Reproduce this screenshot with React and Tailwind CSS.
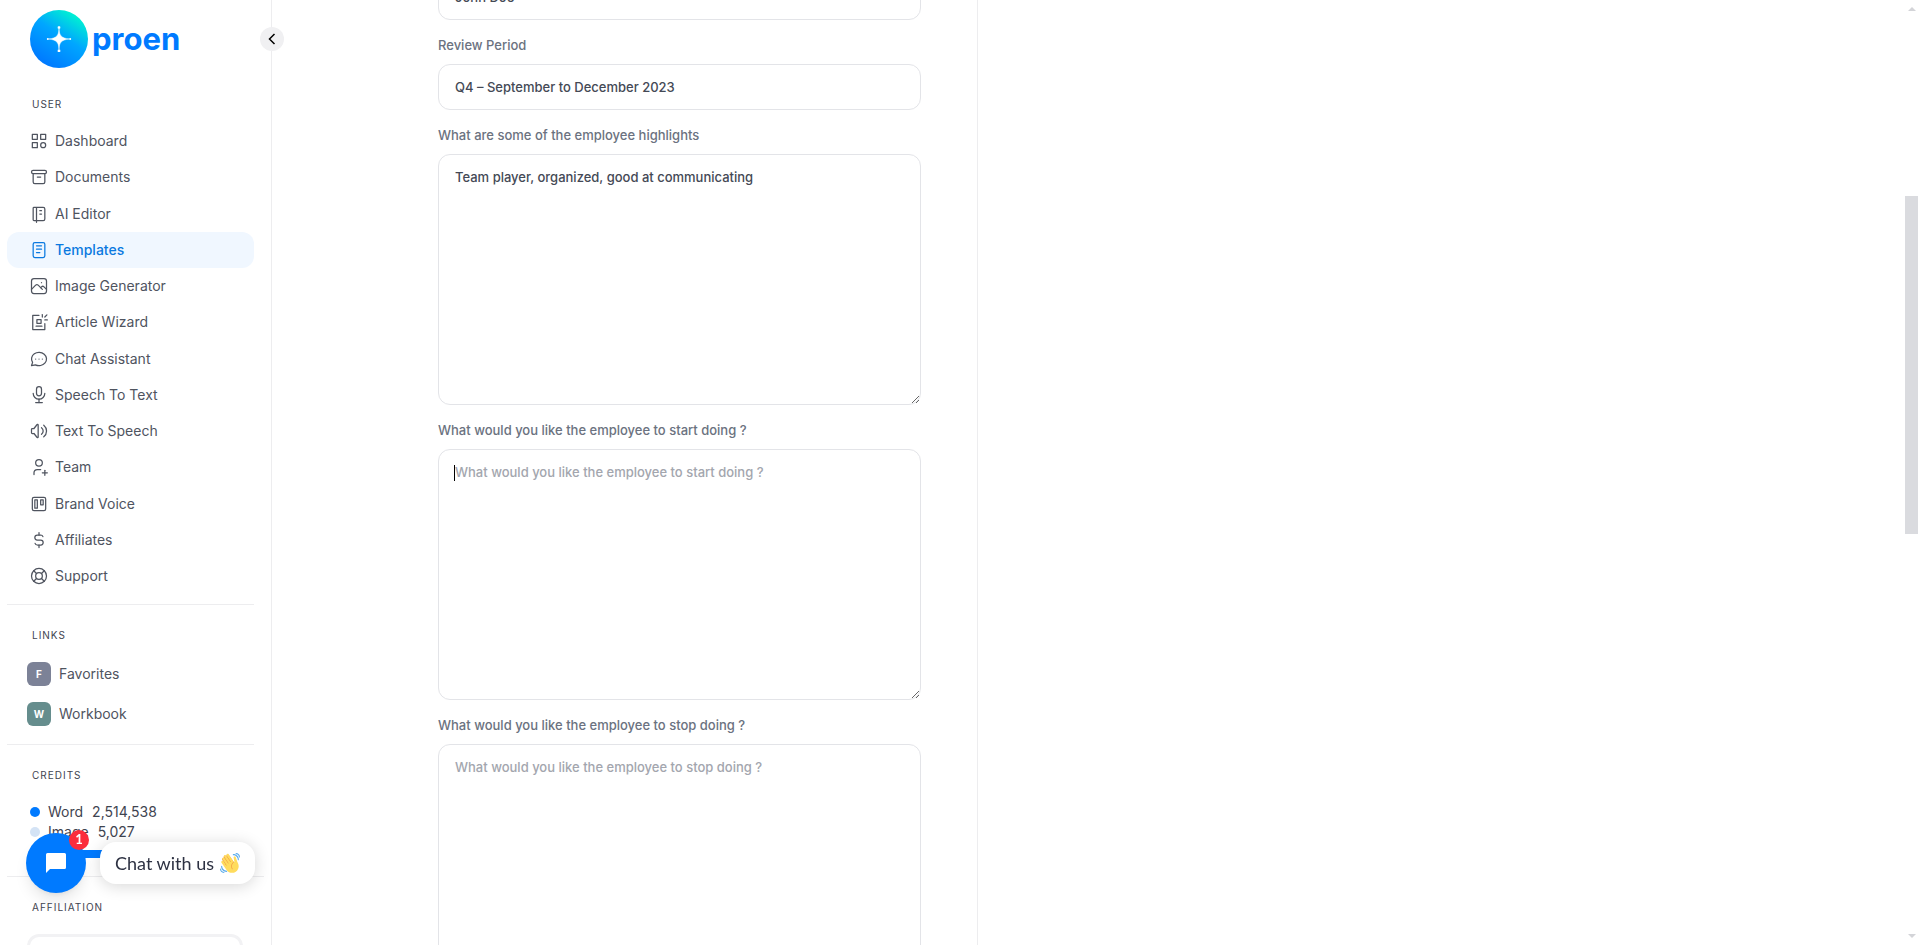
import { useState } from "react";

const menu = [
  {
    name: "Dashboard",
    paths: ["M4 4h6v6h-6z", "M14 4h6v6h-6z", "M4 14h6v6h-6z", "M17 17m-3 0a3 3 0 1 0 6 0a3 3 0 1 0 -6 0"],
  },
  {
    name: "Documents",
    paths: [
      "M3 4m0 2a2 2 0 0 1 2 -2h14a2 2 0 0 1 2 2v0a2 2 0 0 1 -2 2h-14a2 2 0 0 1 -2 -2z",
      "M5 8v10a2 2 0 0 0 2 2h10a2 2 0 0 0 2 -2v-10",
      "M10 12l4 0",
    ],
  },
  {
    name: "AI Editor",
    paths: [
      "M6 4h11a2 2 0 0 1 2 2v12a2 2 0 0 1 -2 2h-11a1 1 0 0 1 -1 -1v-14a1 1 0 0 1 1 -1m3 0v18",
      "M13 8l2 0",
      "M13 12l2 0",
    ],
  },
  {
    name: "Templates",
    paths: [
      "M5 3m0 2a2 2 0 0 1 2 -2h10a2 2 0 0 1 2 2v14a2 2 0 0 1 -2 2h-10a2 2 0 0 1 -2 -2z",
      "M9 7l6 0",
      "M9 11l6 0",
      "M9 15l4 0",
    ],
  },
  {
    name: "Image Generator",
    paths: [
      "M15 8h.01",
      "M3 6a3 3 0 0 1 3 -3h12a3 3 0 0 1 3 3v12a3 3 0 0 1 -3 3h-12a3 3 0 0 1 -3 -3v-12z",
      "M3 16l5 -5c.928 -.893 2.072 -.893 3 0l5 5",
      "M14 14l1 -1c.928 -.893 2.072 -.893 3 0l3 3",
    ],
  },
  {
    name: "Article Wizard",
    paths: [
      "M12 4h-7.500v17h14.500v-7",
      "M9.500 9h5v4.500h-5z",
      "M8.500 17h7",
      "M16 3v3",
      "M21.500 3.500l-2.500 2.500",
      "M19 9.500h3",
    ],
  },
  {
    name: "Chat Assistant",
    paths: [
      "M3 20l1.300 -3.900c-2.324 -3.437 -1.426 -7.872 2.100 -10.374c3.526 -2.501 8.590 -2.296 11.845 .480c3.255 2.777 3.695 7.266 1.029 10.501c-2.666 3.235 -7.615 4.215 -11.574 2.293l-4.700 1",
      "M8 12v.01",
      "M12 12v.01",
      "M16 12v.01",
    ],
  },
  {
    name: "Speech To Text",
    paths: [
      "M9 2m0 3a3 3 0 0 1 3 -3h0a3 3 0 0 1 3 3v5a3 3 0 0 1 -3 3h0a3 3 0 0 1 -3 -3z",
      "M5 10a7 7 0 0 0 14 0",
      "M8 21l8 0",
      "M12 17l0 4",
    ],
  },
  {
    name: "Text To Speech",
    paths: [
      "M15 8a5 5 0 0 1 0 8",
      "M17.700 5a9 9 0 0 1 0 14",
      "M6 15h-2a1 1 0 0 1 -1 -1v-4a1 1 0 0 1 1 -1h2l3.500 -4.500a.8 .8 0 0 1 1.500 .5v14a.8 .8 0 0 1 -1.500 .5l-3.500 -4.500",
    ],
  },
  {
    name: "Team",
    paths: ["M8 7a4 4 0 1 0 8 0a4 4 0 0 0 -8 0", "M16 19h6", "M19 16v6", "M6 21v-2a4 4 0 0 1 4 -4h4"],
  },
  {
    name: "Brand Voice",
    paths: [
      "M4 4m0 2a2 2 0 0 1 2 -2h12a2 2 0 0 1 2 2v12a2 2 0 0 1 -2 2h-12a2 2 0 0 1 -2 -2z",
      "M7 7h3v10h-3z",
      "M14 7h3v6h-3z",
    ],
  },
  {
    name: "Affiliates",
    paths: [
      "M16.700 8a3 3 0 0 0 -2.700 -2h-4a3 3 0 0 0 0 6h4a3 3 0 0 1 0 6h-4a3 3 0 0 1 -2.700 -2",
      "M12 3v3m0 12v3",
    ],
  },
  {
    name: "Support",
    paths: [
      "M12 12m-4 0a4 4 0 1 0 8 0a4 4 0 1 0 -8 0",
      "M12 12m-9 0a9 9 0 1 0 18 0a9 9 0 1 0 -18 0",
      "M15 15l3.350 3.350",
      "M9 15l-3.350 3.350",
      "M5.650 5.650l3.350 3.350",
      "M18.350 5.650l-3.350 3.350",
    ],
  },
];

const links = [
  { name: "Favorites", letter: "F", color: "bg-[#7c8297]" },
  { name: "Workbook", letter: "W", color: "bg-[#658d8d]" },
];

const fields = [
  { id: "name", label: "Employee Name", type: "text", value: "John Doe" },
  { id: "period", label: "Review Period", type: "text", value: "Q4 – September to December 2023" },
  {
    id: "highlights",
    label: "What are some of the employee highlights",
    type: "area",
    value: "Team player, organized, good at communicating",
  },
  { id: "start", label: "What would you like the employee to start doing ?", type: "area", value: "", focus: true },
  { id: "stop", label: "What would you like the employee to stop doing ?", type: "area", value: "" },
];

function Icon({ paths }) {
  return (
    <svg
      className="size-5 shrink-0"
      viewBox="0 0 24 24"
      fill="none"
      stroke="currentColor"
      strokeWidth="1.5"
      strokeLinecap="round"
      strokeLinejoin="round"
    >
      {paths.map((d) => (
        <path key={d} d={d} />
      ))}
    </svg>
  );
}

function Logo() {
  return (
    <a href="#" className="flex items-center gap-1 pl-[30px]">
      <svg className="size-[58px]" viewBox="0 0 58 58">
        <defs>
          <linearGradient id="logo" x1="0.85" y1="0.1" x2="0.3" y2="0.95">
            <stop offset="0" stopColor="#00f5d0" />
            <stop offset="0.45" stopColor="#00a6ff" />
            <stop offset="1" stopColor="#007aff" />
          </linearGradient>
        </defs>
        <circle cx="29" cy="29" r="29" fill="url(#logo)" />
        <path
          d="M29 18.500c.4 7.500 2.500 9.700 10.500 10.500c-8 .8 -10.100 3 -10.500 10.500c-.4 -7.500 -2.500 -9.700 -10.500 -10.500c8 -.8 10.100 -3 10.500 -10.500z"
          fill="#fff"
          stroke="#fff"
          strokeWidth="0.5"
        />
        <g fill="#fff">
          <rect x="27.700" y="16.300" width="2.600" height="2.400" rx="0.600" />
          <rect x="27.700" y="39.500" width="2.600" height="2.600" rx="0.600" />
          <circle cx="17.800" cy="29" r="1" />
          <circle cx="40.200" cy="29" r="1" />
        </g>
      </svg>
      <span className="text-[31px] leading-10 font-bold text-[#007aff]">proen</span>
    </a>
  );
}

function Heading({ children }) {
  return <h2 className="pl-8 text-[10px] leading-4 tracking-widest text-[#3f4450] uppercase">{children}</h2>;
}

function Sidebar() {
  const [active, setActive] = useState("Templates");

  return (
    <aside className="relative w-[272px] shrink-0 border-r border-[#ededef] pt-2.5">
      <button
        aria-label="Collapse sidebar"
        className="absolute top-[27px] -right-[13px] flex size-6 items-center justify-center rounded-full bg-[#f0f0f2] text-black"
      >
        <svg className="size-4" viewBox="0 0 16 16" fill="none" stroke="currentColor" strokeWidth="1.5">
          <path d="M10.500 3l-5 5l5 5" />
        </svg>
      </button>

      <Logo />

      <section className="mt-7">
        <Heading>User</Heading>
        <nav className="mt-[11px] mr-[17px] ml-[7px] flex min-h-[471px] flex-col justify-between">
          {menu.map((item) => (
            <a
              key={item.name}
              href="#"
              onClick={() => setActive(item.name)}
              className={`flex h-9 items-center gap-1.5 rounded-xl pl-[22px] text-sm ${
                active === item.name ? "bg-[#f0f7ff] font-medium text-[#0a79e0]" : "text-[#4f545f]"
              }`}
            >
              <Icon paths={item.paths} />
              {item.name}
            </a>
          ))}
        </nav>
      </section>
      <hr className="mt-[10px] mr-[17px] ml-[7px] border-[#ededef]" />

      <section className="mt-[22px]">
        <Heading>Links</Heading>
        <div className="mt-[19px] flex flex-col gap-4">
          {links.map((link) => (
            <a key={link.name} href="#" className="flex items-center gap-2 pl-[27px] text-sm leading-6 text-[#4f545f]">
              <span
                className={`flex size-6 items-center justify-center rounded-md text-[10px] font-bold text-white ${link.color}`}
              >
                {link.letter}
              </span>
              {link.name}
            </a>
          ))}
        </div>
      </section>
      <hr className="mt-[18px] mr-[17px] ml-[7px] border-[#ededef]" />

      <section className="mt-[22px]">
        <Heading>Credits</Heading>
        <div className="mt-[19px] pl-[30px] text-sm text-[#3f4450]">
          <p className="flex items-center">
            <span className="mr-2 size-2.5 rounded-full bg-[#007aff]" />
            Word <span className="ml-[9px]">2,514,538</span>
          </p>
          <p className="flex items-center">
            <span className="mr-2 size-2.5 rounded-full bg-[#d4e3f5]" />
            Image <span className="ml-[9px]">5,027</span>
          </p>
        </div>
        <div className="mt-2 mr-10 ml-[30px] h-2 rounded-full bg-[#007aff]" />
      </section>
      <hr className="mt-[18px] mr-[7px] ml-[7px] border-[#ededef]" />

      <section className="mt-[22px]">
        <Heading>Affiliation</Heading>
        <div className="mt-[19px] mr-7 ml-[27px] h-32 rounded-xl border-[3px] border-[#f2f2f4]" />
      </section>
    </aside>
  );
}

function Field({ field }) {
  const [value, setValue] = useState(field.value);
  const shared =
    "block w-full rounded-xl border border-[#e3e4e8] bg-white px-4 text-[13px] font-medium text-[#444955] outline-none placeholder:text-[#a3a6ae]";

  return (
    <div className="relative">
      <label htmlFor={field.id} className="mb-2.5 block text-[13px] leading-[18px] font-medium text-[#6b7280]">
        {field.label}
      </label>
      {field.type === "text" ? (
        <input
          id={field.id}
          value={value}
          onChange={(e) => setValue(e.target.value)}
          className={`${shared} h-[46px]`}
        />
      ) : (
        <textarea
          id={field.id}
          value={value}
          placeholder={field.label}
          onChange={(e) => setValue(e.target.value)}
          className={`${shared} h-[251px] resize-y py-3 leading-5`}
        />
      )}
      {field.focus && value === "" && (
        <span className="pointer-events-none absolute top-11 left-4 h-4 w-px bg-black" />
      )}
    </div>
  );
}

function ChatWidget() {
  return (
    <div className="fixed bottom-[52px] left-[26px] flex items-center gap-3.5">
      <button
        aria-label="Open chat"
        className="relative flex size-[60px] items-center justify-center rounded-full bg-[#007aff] shadow-lg"
      >
        <svg className="size-5" viewBox="0 0 20 20" fill="#fff">
          <path d="M1.500 0h17a1.500 1.500 0 0 1 1.500 1.500v13a1.500 1.500 0 0 1 -1.500 1.500h-14.500l-4 4v-18.500a1.500 1.500 0 0 1 1.500 -1.500z" />
        </svg>
        <span className="absolute -top-[3px] -right-[3px] flex size-5 items-center justify-center rounded-full bg-[#fb2d3c] font-[Lato,sans-serif] text-[13px] font-bold text-white">
          1
        </span>
      </button>
      <button className="flex h-[42px] items-center gap-1.5 rounded-2xl bg-white px-[15px] font-[Lato,sans-serif] text-[18px] text-[#2d3142] shadow-[0_2px_16px_rgba(0,0,0,0.16)]">
        Chat with us
        <svg className="size-5" viewBox="0 0 36 36">
          <path
            d="M4.861 9.147c.94-.657 2.357-.531 3.201.166l-.968-1.407c-.779-1.111-.5-2.313.612-3.093 1.112-.777 4.263 1.312 4.263 1.312-.786-1.122-.639-2.544.483-3.331 1.122-.784 2.670-.513 3.456.611l10.292 14.720L25 31 11.083 25.042 4.245 12.793c-.786-1.124-.507-2.860.616-3.646z"
            fill="#ef9645"
          />
          <path
            d="M2.695 17.336s-1.132-1.650.519-2.781c1.649-1.131 2.780.518 2.780.518l5.251 7.658c.181-.302.379-.600.600-.894L4.557 11.210s-1.131-1.649.519-2.780c1.649-1.131 2.780.518 2.780.518l6.855 9.997c.255-.208.516-.417.785-.622L7.549 6.732s-1.131-1.649.519-2.780c1.649-1.131 2.780.518 2.780.518l7.947 11.589c.292-.179.581-.334.871-.498L12.238 4.729s-1.131-1.649.518-2.780c1.649-1.131 2.780.518 2.780.518l7.854 11.454 1.194 1.742c-4.948 3.394-5.419 9.779-2.592 13.902.565.825 1.390.260 1.390.260-3.393-4.949-2.357-10.510 2.592-13.903L24.515 8.620s-.545-1.924 1.378-2.470c1.924-.545 2.470 1.379 2.470 1.379l1.685 5.004c.668 1.984 1.379 3.961 2.320 5.831 2.657 5.280 1.070 11.842-3.940 15.279-5.465 3.747-12.936 2.354-16.684-3.110L2.695 17.336z"
            fill="#ffdc5d"
          />
          <g fill="#5dadec">
            <path d="M12 32.042C8 32.042 3.958 28 3.958 24c0-.553-.405-1-.958-1s-1.042.447-1.042 1C1.958 30 6 34.042 12 34.042c.553 0 1-.489 1-1.042s-.447-.958-1-.958z" />
            <path d="M7 34c-3 0-5-2-5-5 0-.553-.447-1-1-1s-1 .447-1 1c0 4 3 7 7 7 .553 0 1-.447 1-1s-.447-1-1-1zM24 2c-.552 0-1 .448-1 1s.448 1 1 1c4 0 8 3.589 8 8 0 .552.448 1 1 1s1-.448 1-1c0-5.514-4-10-10-10z" />
            <path d="M29 .042c-.552 0-1 .406-1 .958s.448 1.042 1 1.042c3 0 4.958 2.225 4.958 4.958 0 .552.489 1 1.042 1s.958-.448.958-1C35.958 3.163 33 .042 29 .042z" />
          </g>
        </svg>
      </button>
    </div>
  );
}

function ScrollRail() {
  return (
    <div className="fixed inset-y-0 right-0 flex w-4 flex-col items-center justify-between py-[7px]">
      <span className="border-x-[4px] border-b-[4px] border-x-transparent border-b-[#d3d4d8]" />
      <span className="absolute top-[196px] right-0.5 h-[338px] w-[13px] bg-[#dadbdf]" />
      <span className="border-x-[4px] border-t-[4px] border-x-transparent border-t-[#d3d4d8]" />
    </div>
  );
}

export default function App() {
  return (
    <div className="flex h-screen overflow-hidden bg-white font-[Inter,sans-serif]">
      <Sidebar />
      <main className="flex-1 pr-4">
        <div className="mx-auto w-full max-w-[1320px]">
          <form className="-mt-[54px] flex w-5/12 flex-col gap-4 border-r border-[#ededef] pr-14 pl-2.5">
            {fields.map((field) => (
              <Field key={field.id} field={field} />
            ))}
          </form>
        </div>
      </main>
      <ChatWidget />
      <ScrollRail />
    </div>
  );
}
